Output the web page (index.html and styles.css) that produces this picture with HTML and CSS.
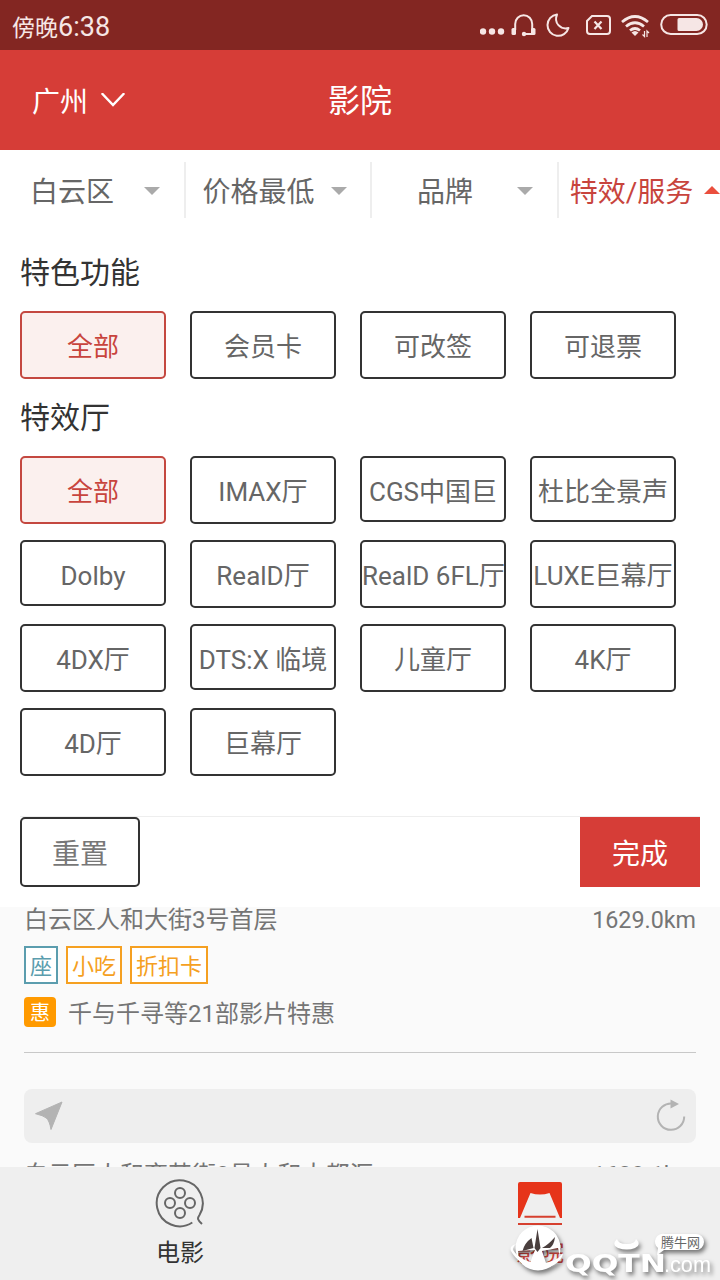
FILE: index.html
```html
<!DOCTYPE html>
<html lang="zh-CN">
<head>
    <meta charset="UTF-8">
    <meta name="viewport" content="width=device-width, initial-scale=1.0">
    <title>影院</title>
    <link rel="stylesheet" href="styles.css">
</head>
<body>
    <div class="app">
        <div class="status-bar">
            <div class="status-time">傍晚<span class="digits">6:38</span></div>
            <svg class="status-icons" width="240" height="50" viewBox="0 0 240 50">
                <g fill="#f6e6e5">
                    <circle cx="3" cy="31.500" r="3.200"/>
                    <circle cx="12" cy="31.500" r="3.200"/>
                    <circle cx="21" cy="31.500" r="3.200"/>
                </g>
                <!-- headset -->
                <path d="M35.200 30V24a8.500 8.800 0 0 1 17 0v6M53 34H44" fill="none" stroke="#f6e6e5" stroke-width="2"/>
                <rect x="31.500" y="28" width="4.500" height="7" rx="1.500" fill="#f6e6e5"/>
                <rect x="51" y="28" width="4.500" height="7" rx="1.500" fill="#f6e6e5"/>
                <circle cx="44" cy="34" r="2.200" fill="#f6e6e5"/>
                <!-- moon -->
                <path d="M77 14.500a10.700 10.700 0 1 0 11.500 13.500c-8 2-15-5-11.500-13.500z" fill="none" stroke="#f6e6e5" stroke-width="2" stroke-linejoin="round"/>
                <!-- no sim -->
                <path d="M112 16h15a3 3 0 0 1 3 3v12a3 3 0 0 1-3 3h-17a3 3 0 0 1-3-3V21z" fill="none" stroke="#f6e6e5" stroke-width="2"/>
                <path d="M114.500 21.500l7 7.500M121.500 21.500l-7 7.500" stroke="#f6e6e5" stroke-width="2.200"/>
                <!-- wifi -->
                <g fill="none" stroke="#f6e6e5" stroke-width="2.800">
                    <path d="M142 22q13-11 26 0M146 26.500q9-7.500 18 0M150 30.500q5-4 10 0"/>
                </g>
                <path d="M151.500 32.500q3.500-3 7 0l-3.500 3.500z" fill="#f6e6e5"/>
                <path d="M164.500 31v5.500l-2-2M167 37v-6l2 2" fill="none" stroke="#f6e6e5" stroke-width="1.200"/>
                <!-- battery -->
                <rect x="181.200" y="15" width="45.500" height="19" rx="9.500" fill="none" stroke="#f6e6e5" stroke-width="2"/>
                <path d="M199 18h17.500a6.500 6.500 0 0 1 0 13h-17.500a1.500 1.500 0 0 1-1.500-1.500v-10a1.500 1.500 0 0 1 1.500-1.500z" fill="#f6e6e5"/>
            </svg>
        </div>

        <div class="header">
            <div class="city">
                <span>广州</span>
                <svg width="24" height="14" viewBox="0 0 24 14"><path d="M1.500 1l10.500 11L22.500 1" fill="none" stroke="#fff" stroke-width="2.500" stroke-linecap="round"/></svg>
            </div>
            <h1>影院</h1>
        </div>

        <div class="filters">
            <div class="filter"><span class="filter-name">白云区</span><span class="arrow"></span></div>
            <div class="filter"><span class="filter-name">价格最低</span><span class="arrow"></span></div>
            <div class="filter"><span class="filter-name">品牌</span><span class="arrow"></span></div>
            <div class="filter active"><span class="filter-name">特效/服务</span><span class="arrow"></span></div>
        </div>

        <div class="panel">
            <h2>特色功能</h2>
            <div class="options">
                <div class="option selected">全部</div>
                <div class="option">会员卡</div>
                <div class="option">可改签</div>
                <div class="option">可退票</div>
            </div>
            <h2>特效厅</h2>
            <div class="options">
                <div class="option selected">全部</div>
                <div class="option">IMAX厅</div>
                <div class="option short">CGS中国巨</div>
                <div class="option short">杜比全景声</div>
                <div class="option short">Dolby</div>
                <div class="option">RealD厅</div>
                <div class="option">RealD 6FL厅</div>
                <div class="option">LUXE巨幕厅</div>
                <div class="option">4DX厅</div>
                <div class="option short">DTS:X 临境</div>
                <div class="option">儿童厅</div>
                <div class="option">4K厅</div>
                <div class="option">4D厅</div>
                <div class="option">巨幕厅</div>
            </div>
            <div class="actions">
                <div class="reset">重置</div>
                <div class="done">完成</div>
            </div>
        </div>

        <div class="cinemas">
            <div class="address"><span>白云区人和大街3号首层</span><span class="distance">1629.0km</span></div>
            <div class="tags">
                <span class="tag seat">座</span>
                <span class="tag">小吃</span>
                <span class="tag">折扣卡</span>
            </div>
            <div class="promo"><span class="promo-icon">惠</span>千与千寻等21部影片特惠</div>
            <div class="location">
                <svg width="30" height="30" viewBox="0 0 30 30"><path d="M1.500 12.700L28 1 17 28.500q-1.500-9-4.700-11.500-3-2.500-10.800-4.300z" fill="#b3b3b3" stroke="#b3b3b3" stroke-linejoin="round"/></svg>
                <svg width="30" height="34" viewBox="0 0 30 34"><path d="M16 4.500A13.200 13.200 0 1 0 28.200 17.500" fill="none" stroke="#b3b3b3" stroke-width="2"/><path d="M14.500 .5l8.500 4.500-8.500 4.500z" fill="#b3b3b3"/></svg>
            </div>
            <div class="address"><span>白云区人和育英街3号人和大都汇</span><span class="distance">1629.1km</span></div>
        </div>

        <div class="tab-bar">
            <div class="tab">
                <svg width="52" height="52" viewBox="0 0 52 52" fill="none" stroke="#666" stroke-width="2">
                    <path d="M38.300 45.500A23 23 0 1 1 45.500 38c-2.500 3.500-2 5 2.500 9"/>
                    <circle cx="26" cy="16" r="5"/>
                    <circle cx="16" cy="26" r="5"/>
                    <circle cx="36" cy="26" r="5"/>
                    <circle cx="26" cy="36" r="5"/>
                </svg>
                <span>电影</span>
            </div>
            <div class="tab current">
                <svg width="52" height="52" viewBox="0 0 52 52">
                    <path d="M6 5h40a2 2 0 0 1 2 2v34h-2L35.500 16q-9.500 3-19 0L6 41H4V7a2 2 0 0 1 2-2z" fill="#e6341a"/>
                    <path d="M10.500 39.700h31M4 47h44" stroke="#d6402f" stroke-width="2"/>
                </svg>
                <span>影院</span>
            </div>
        </div>

        <svg class="watermark" width="220" height="70" viewBox="0 0 220 70">
            <g class="raised" fill="#fff">
                <!-- globe with two openings -->
                <path fill-rule="evenodd" d="M38 15.500a22.500 22.500 0 1 1 0 45 22.500 22.500 0 1 1 0-45zM18 41l17-1-5 13q-7-2-12-6zM42 41l16-3q2 6 0 11l-12 4z"/>
                <path d="M16 34q-7 2-5 7c4 8 15 17 27 18 12 0 24-7 25-16q-8 11-24 11Q20 51 13 40q-1-3 3-6z"/>
                <path d="M117 29q-6 6 1 9 9 3 17 0 7-3 1-9-1 5-9 5-9 0-10-5z"/>
                <text class="mark-name" x="65" y="62" textLength="101" lengthAdjust="spacingAndGlyphs">QQTN</text>
                <text class="mark-com" x="164" y="62" textLength="47" lengthAdjust="spacingAndGlyphs">.com</text>
                <path d="M165 24h31a8 8 0 0 1 0 16h-32l-7 5 1-7a8 8 0 0 1 7-14z"/>
            </g>
            <path d="M37.500 19l3 19-3 4-3-4zM31.500 28l2 10-11 3q2-8 9-13zM42 38q6-3 13-11-1 8-5 11z" fill="#4a3f3e"/>
            <text class="mark-tip" x="161" y="37">腾牛网</text>
        </svg>
    </div>
</body>
</html>
```
FILE: styles.css
```css
* {
    box-sizing: border-box;
}
body {
    margin: 0;
    font-family: Roboto, "Noto Sans CJK SC", sans-serif;
    color: #666;
    background-color: #fafafa;
}
h1, h2 {
    margin: 0;
    font-weight: normal;
}
.app {
    position: relative;
    display: flex;
    flex-direction: column;
    width: 720px;
    height: 1280px;
    overflow: hidden;
}
.status-bar {
    display: flex;
    justify-content: space-between;
    height: 50px;
    padding-left: 12px;
    background-color: #832622;
    color: #f6e6e5;
    font-size: 23px;
    line-height: 54px;
}
.digits {
    font-size: 27px;
}
.header {
    display: grid;
    grid-template-columns: 1fr auto 1fr;
    align-items: center;
    height: 100px;
    padding: 0 32px;
    background-color: #d63d37;
    color: #fff;
}
.city {
    display: flex;
    align-items: center;
    gap: 13px;
    font-size: 28px;
}
.header h1 {
    padding-top: 2px;
    font-size: 32px;
    line-height: 46px;
}
.filters {
    display: flex;
    height: 80px;
    padding: 12px 0;
    background-color: #fff;
}
.filter {
    display: flex;
    flex: none;
    align-items: center;
    width: 186.500px;
    height: 56px;
    padding-left: 1px;
    border-right: 2px solid #eee;
    font-size: 28px;
}
.filter:first-child {
    width: 185.500px;
    padding-left: 0;
}
.filter-name {
    width: 144px;
    text-align: center;
    white-space: nowrap;
}
.arrow {
    margin-top: 1px;
    border: 8px solid transparent;
    border-top-color: #aaa;
    border-bottom: 0;
}
.filter.active {
    color: #c8443d;
}
.active .arrow {
    margin-top: -1px;
    border-top: 0;
    border-bottom: 8px solid #ea4e3d;
}
.panel {
    height: 677px;
    padding: 20px 20px 0;
    background-color: #fff;
}
.panel h2 {
    height: 61px;
    color: #333;
    font-size: 30px;
    line-height: 45px;
}
.options {
    display: grid;
    grid-template-columns: repeat(4, 146px);
    column-gap: 24px;
    grid-auto-rows: 84px;
}
.option {
    height: 68px;
    border: 2px solid #333;
    border-radius: 5px;
    font-size: 26px;
    line-height: 68px;
    text-align: center;
    white-space: nowrap;
}
.option.short {
    height: 66px;
}
.option.selected {
    border-color: #c44840;
    background-color: #fbf0ee;
    color: #c8443d;
}
.actions {
    display: flex;
    justify-content: space-between;
    margin-top: 24px;
    border-top: 1px solid #eee;
    font-size: 28px;
    line-height: 71px;
    text-align: center;
}
.reset {
    width: 120px;
    height: 70px;
    border: 2px solid #333;
    border-radius: 5px;
    color: #777;
}
.done {
    width: 120px;
    height: 70px;
    padding-top: 2px;
    background-color: #d63d37;
    color: #fff;
}
.cinemas {
    height: 260px;
    padding: 0 24px;
    overflow: hidden;
    background-color: #fafafa;
    color: #757575;
    font-size: 24px;
}
.address {
    display: flex;
    justify-content: space-between;
    line-height: 26px;
}
.distance {
    font-size: 23.300px;
}
.tags {
    display: flex;
    gap: 8px;
    margin-top: 13px;
}
.tag {
    height: 38px;
    padding: 0 4px;
    border: 2px solid #f5a021;
    background-color: #fff;
    color: #f5a021;
    font-size: 22px;
    line-height: 37px;
}
.tag.seat {
    border-color: #5b9dae;
    color: #5b9dae;
}
.promo {
    display: flex;
    gap: 12px;
    height: 69px;
    padding-top: 13px;
    border-bottom: 1px solid #c8c8c8;
    line-height: 34px;
}
.promo-icon {
    width: 32px;
    height: 30px;
    border-radius: 4px;
    background-color: #ff9a00;
    color: #fff;
    font-size: 20px;
    line-height: 32px;
    text-align: center;
}
.location {
    display: flex;
    justify-content: space-between;
    align-items: center;
    height: 54px;
    margin: 36px 0 19px;
    padding: 0 10px;
    border-radius: 8px;
    background-color: #eee;
}
.tab-bar {
    display: flex;
    height: 113px;
    background-color: #efefef;
}
.tab {
    display: flex;
    flex: 1;
    flex-direction: column;
    align-items: center;
    padding-top: 10px;
    color: #333;
    font-size: 24px;
    line-height: 48px;
}
.tab.current {
    color: #c8443d;
}
.watermark {
    position: absolute;
    left: 500px;
    top: 1210px;
}
.raised {
    filter: drop-shadow(2px 3px 2px rgba(0,0,0,0.5));
}
.mark-name {
    font: bold 25px "DejaVu Sans", sans-serif;
}
.mark-com {
    font: 22px "Liberation Sans", sans-serif;
}
.mark-tip {
    fill: #666;
    font: 13px "Noto Sans CJK SC", sans-serif;
}
```
